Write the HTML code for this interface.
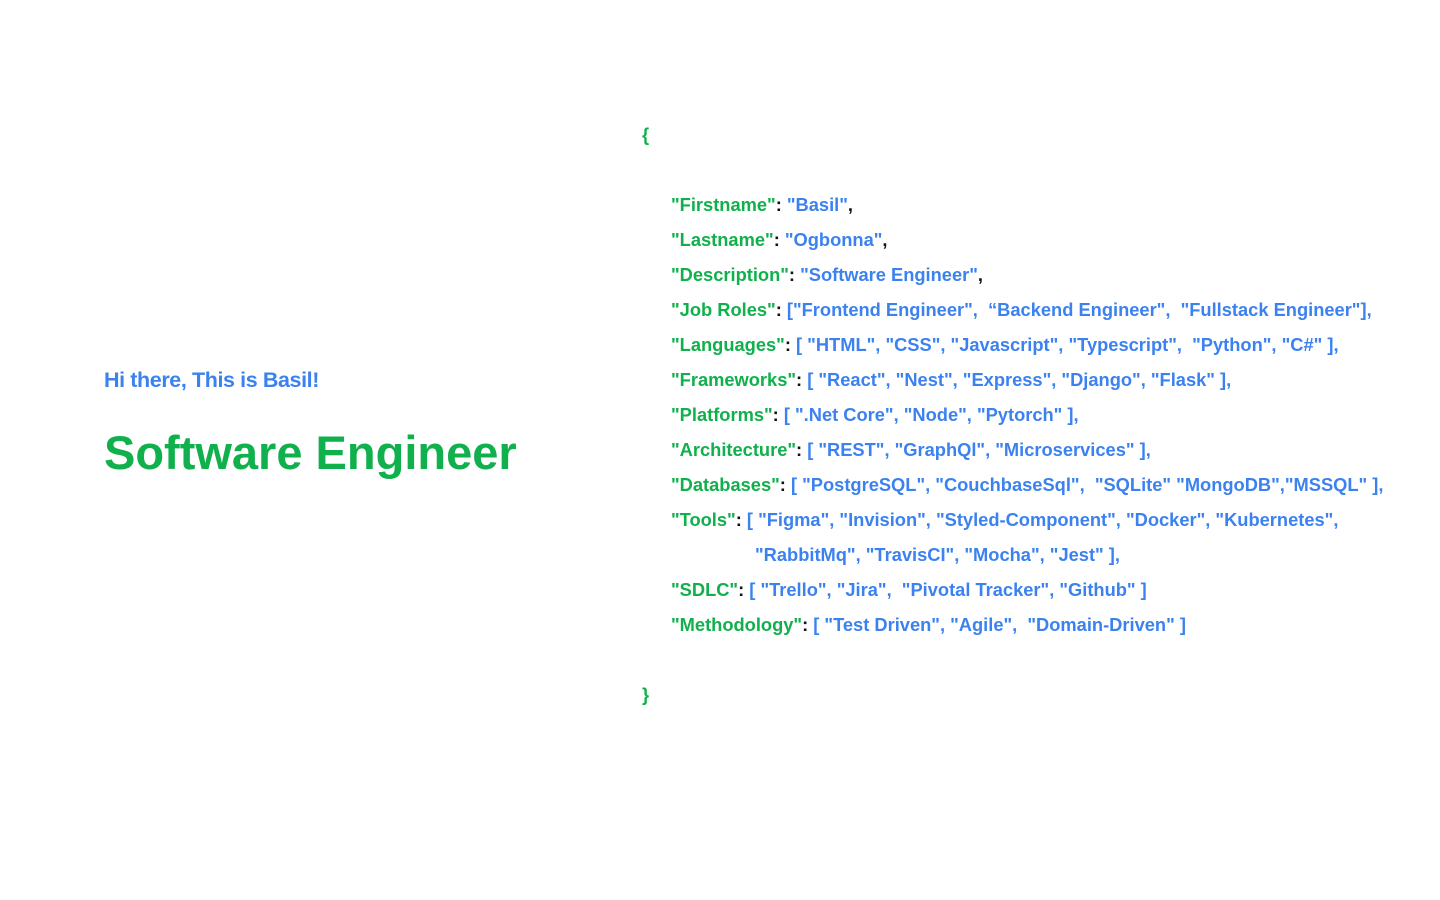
<!DOCTYPE html>
<html><head><meta charset="utf-8"><style>
html,body{margin:0;padding:0;background:#fff;width:1440px;height:900px;overflow:hidden;font-family:"Liberation Sans",sans-serif;font-weight:bold;}
.g{color:#10b14c}.b{color:#3b82f0}.k{color:#111}
.l{position:absolute;left:671px;font-size:18.3px;line-height:35px;white-space:pre}
#hi{position:absolute;left:104px;top:368px;font-size:21.5px;color:#3b82f0;letter-spacing:-0.4px}
#se{position:absolute;left:104px;top:425px;font-size:47px;color:#10b14c}
</style></head><body>
<div id="hi">Hi there, This is Basil!</div>
<div id="se">Software Engineer</div>
<div class="l g" style="left:642px;top:117px">{</div>
<div class="l" style="top:187px"><span class="g">"Firstname"</span><span class="k">: </span><span class="b">"Basil"</span><span class="k">,</span></div>
<div class="l" style="top:222px"><span class="g">"Lastname"</span><span class="k">: </span><span class="b">"Ogbonna"</span><span class="k">,</span></div>
<div class="l" style="top:257px"><span class="g">"Description"</span><span class="k">: </span><span class="b">"Software Engineer"</span><span class="k">,</span></div>
<div class="l" style="top:292px"><span class="g">"Job Roles"</span><span class="k">: </span><span class="b">["Frontend Engineer",  “Backend Engineer",  "Fullstack Engineer"],</span></div>
<div class="l" style="top:327px"><span class="g">"Languages"</span><span class="k">: </span><span class="b">[ "HTML", "CSS", "Javascript", "Typescript",  "Python", "C#" ],</span></div>
<div class="l" style="top:362px"><span class="g">"Frameworks"</span><span class="k">: </span><span class="b">[ "React", "Nest", "Express", "Django", "Flask" ],</span></div>
<div class="l" style="top:397px"><span class="g">"Platforms"</span><span class="k">: </span><span class="b">[ ".Net Core", "Node", "Pytorch" ],</span></div>
<div class="l" style="top:432px"><span class="g">"Architecture"</span><span class="k">: </span><span class="b">[ "REST", "GraphQl", "Microservices" ],</span></div>
<div class="l" style="top:467px"><span class="g">"Databases"</span><span class="k">: </span><span class="b">[ "PostgreSQL", "CouchbaseSql",  "SQLite" "MongoDB","MSSQL" ],</span></div>
<div class="l" style="top:502px"><span class="g">"Tools"</span><span class="k">: </span><span class="b">[ "Figma", "Invision", "Styled-Component", "Docker", "Kubernetes",</span></div>
<div class="l b" style="left:755px;top:537px">"RabbitMq", "TravisCI", "Mocha", "Jest" ],</div>
<div class="l" style="top:572px"><span class="g">"SDLC"</span><span class="k">: </span><span class="b">[ "Trello", "Jira",  "Pivotal Tracker", "Github" ]</span></div>
<div class="l" style="top:607px"><span class="g">"Methodology"</span><span class="k">: </span><span class="b">[ "Test Driven", "Agile",  "Domain-Driven" ]</span></div>
<div class="l g" style="left:642px;top:677px">}</div>
</body></html>
